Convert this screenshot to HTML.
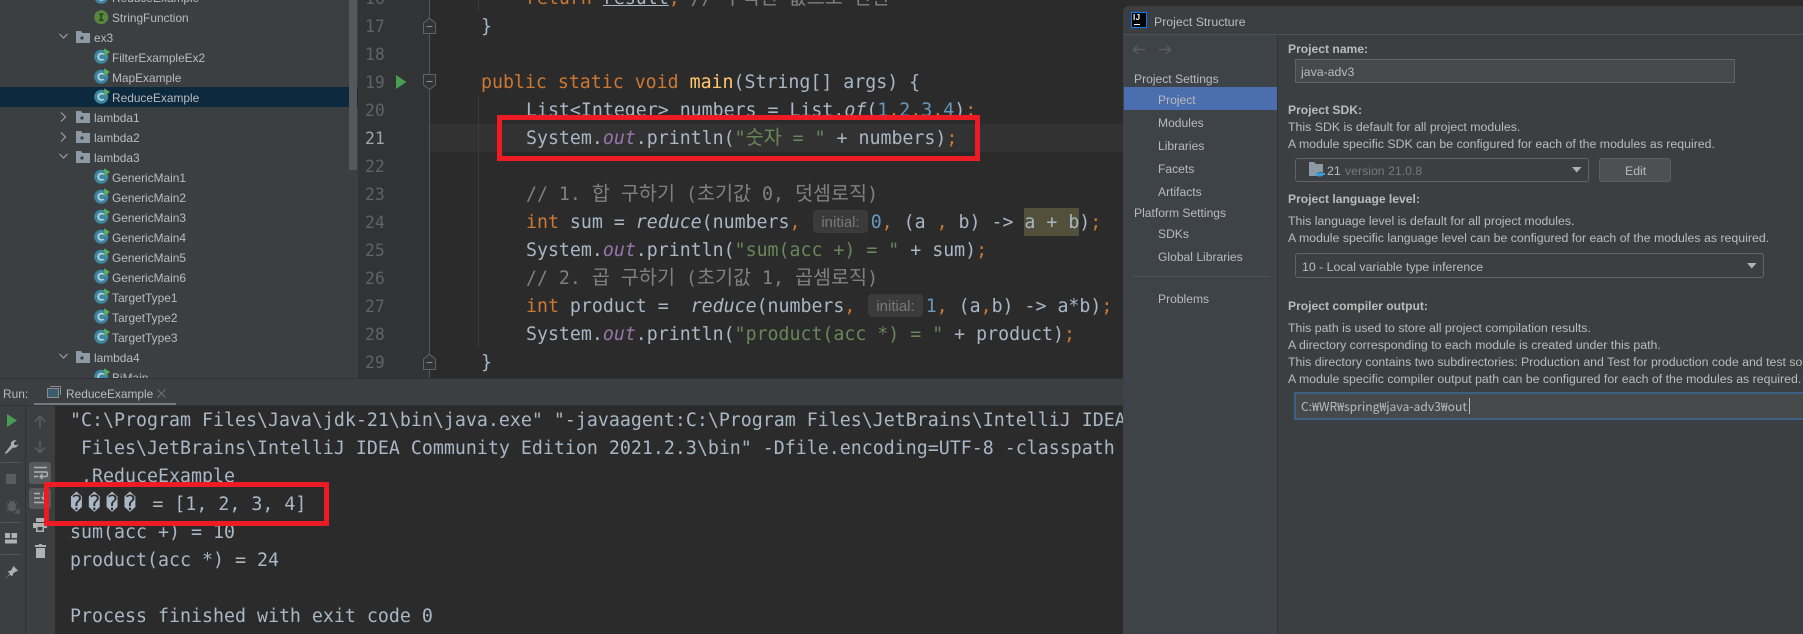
<!DOCTYPE html>
<html><head><meta charset="utf-8"><title>Project Structure</title>
<style>
html,body{margin:0;padding:0;width:1803px;height:634px;overflow:hidden;background:#2b2b2b}
div,span{box-sizing:border-box}
#w{position:absolute;left:0;top:0;width:1803px;height:634px;overflow:hidden}
.a{position:absolute}
.t{position:absolute;white-space:pre;font:11.9px/20px "Liberation Sans","Noto Sans CJK KR",sans-serif;color:#bbbbbb}
.q{font-size:12.3px;margin-top:1px}
.p{font-size:12.1px;margin-top:1px}
.m{position:absolute;white-space:pre;font:18.24px/28px "DejaVu Sans Mono","Noto Sans CJK KR",monospace;color:#a9b7c6;height:28px;margin-top:1px}
.o{font-size:18.27px}
.k{color:#cc7832}.s{color:#6a8759}.c{color:#808080}.n{color:#6897bb}.f{color:#9876aa;font-style:italic}.i{font-style:italic}.y{color:#ffc66d}
.h{font-family:"Noto Sans CJK KR",sans-serif;font-size:19.6px;line-height:0}
.u{font-size:21px;letter-spacing:5.2px;line-height:0}
.ln{position:absolute;left:365px;font:16.5px/28px "DejaVu Sans Mono",monospace;color:#606366;height:28px;margin-top:1px}
.d{position:absolute;white-space:pre;font:12.33px/17px "Liberation Sans",sans-serif;color:#bbbbbb;left:1288px;margin-top:1px}
.b{font-weight:bold;font-size:12.12px}
.rb{position:absolute;border:5px solid #ed1c24}
.hint{position:absolute;background:#3b3b3b;border-radius:4px;color:#787878;font:15px/25px "Liberation Sans",sans-serif;text-align:center}
svg{position:absolute;overflow:visible}
</style></head><body>
<svg width="0" height="0" style="position:absolute">
<symbol id="ci" viewBox="0 0 16 16"><circle cx="7.2" cy="8.8" r="7" fill="#3d87a3"/><path d="M9.6 6.4A3.2 3.2 0 1 0 9.6 11.2" fill="none" stroke="#c5d8df" stroke-width="1.6"/><path d="M10.2 0.3L16 4L10.2 8z" fill="#5cad5a"/></symbol>
<symbol id="fo" viewBox="0 0 14 12"><path d="M0 0H5L6.5 2H14V12H0z" fill="#8d99a3"/><circle cx="6" cy="7" r="1.6" fill="#3c3f41"/></symbol>
</svg>
<div id="w">

<!-- tree -->
<div class="a" style="left:0;top:0;width:358px;height:378px;background:#3c3f41;overflow:hidden">
<div class="a" style="left:0;top:87px;width:358px;height:20px;background:#0d293e"></div>
<div class="a" style="left:349px;top:0;width:8px;height:170px;background:#54585a"></div>

<svg style="left:94px;top:-12px" width="16" height="16"><use href="#ci"/></svg><div class="t" style="left:112px;top:-12px">ReduceExample</div>
<svg style="left:94px;top:10px" width="15" height="15"><circle cx="7.2" cy="7.2" r="7" fill="#59863f"/><path d="M5 4.2H9.5M7.2 4.2V10.2M5 10.2H9.5" stroke="#263a1c" stroke-width="1.4" fill="none"/></svg><div class="t" style="left:112px;top:8px">StringFunction</div>

<svg style="left:59px;top:33px" width="9" height="7"><path d="M.5 1L4.5 5L8.5 1" fill="none" stroke="#9a9da0" stroke-width="1.2"/></svg>
<svg style="left:76px;top:31px" width="14" height="12"><use href="#fo"/></svg><div class="t" style="left:94px;top:28px">ex3</div>

<svg style="left:94px;top:48px" width="16" height="16"><use href="#ci"/></svg><div class="t" style="left:112px;top:48px">FilterExampleEx2</div>
<svg style="left:94px;top:68px" width="16" height="16"><use href="#ci"/></svg><div class="t" style="left:112px;top:68px">MapExample</div>
<svg style="left:94px;top:88px" width="16" height="16"><use href="#ci"/></svg><div class="t" style="left:112px;top:88px">ReduceExample</div>

<svg style="left:60px;top:112px" width="7" height="10"><path d="M1 .5L5.5 5L1 9.5" fill="none" stroke="#9a9da0" stroke-width="1.2"/></svg>
<svg style="left:76px;top:111px" width="14" height="12"><use href="#fo"/></svg><div class="t" style="left:94px;top:108px">lambda1</div>
<svg style="left:60px;top:132px" width="7" height="10"><path d="M1 .5L5.5 5L1 9.5" fill="none" stroke="#9a9da0" stroke-width="1.2"/></svg>
<svg style="left:76px;top:131px" width="14" height="12"><use href="#fo"/></svg><div class="t" style="left:94px;top:128px">lambda2</div>
<svg style="left:59px;top:153px" width="9" height="7"><path d="M.5 1L4.5 5L8.5 1" fill="none" stroke="#9a9da0" stroke-width="1.2"/></svg>
<svg style="left:76px;top:151px" width="14" height="12"><use href="#fo"/></svg><div class="t" style="left:94px;top:148px">lambda3</div>

<svg style="left:94px;top:168px" width="16" height="16"><use href="#ci"/></svg><div class="t" style="left:112px;top:168px">GenericMain1</div>
<svg style="left:94px;top:188px" width="16" height="16"><use href="#ci"/></svg><div class="t" style="left:112px;top:188px">GenericMain2</div>
<svg style="left:94px;top:208px" width="16" height="16"><use href="#ci"/></svg><div class="t" style="left:112px;top:208px">GenericMain3</div>
<svg style="left:94px;top:228px" width="16" height="16"><use href="#ci"/></svg><div class="t" style="left:112px;top:228px">GenericMain4</div>
<svg style="left:94px;top:248px" width="16" height="16"><use href="#ci"/></svg><div class="t" style="left:112px;top:248px">GenericMain5</div>
<svg style="left:94px;top:268px" width="16" height="16"><use href="#ci"/></svg><div class="t" style="left:112px;top:268px">GenericMain6</div>
<svg style="left:94px;top:288px" width="16" height="16"><use href="#ci"/></svg><div class="t" style="left:112px;top:288px">TargetType1</div>
<svg style="left:94px;top:308px" width="16" height="16"><use href="#ci"/></svg><div class="t" style="left:112px;top:308px">TargetType2</div>
<svg style="left:94px;top:328px" width="16" height="16"><use href="#ci"/></svg><div class="t" style="left:112px;top:328px">TargetType3</div>

<svg style="left:59px;top:353px" width="9" height="7"><path d="M.5 1L4.5 5L8.5 1" fill="none" stroke="#9a9da0" stroke-width="1.2"/></svg>
<svg style="left:76px;top:351px" width="14" height="12"><use href="#fo"/></svg><div class="t" style="left:94px;top:348px">lambda4</div>
<svg style="left:94px;top:368px" width="16" height="16"><use href="#ci"/></svg><div class="t" style="left:112px;top:368px">BiMain</div>
</div>

<!-- editor -->
<div class="a" style="left:358px;top:0;width:765px;height:378px;background:#2b2b2b;overflow:hidden" id="e">
<div class="a" style="left:0;top:0;width:72px;height:378px;background:#313335"></div>
<div class="a" style="left:72px;top:124px;width:693px;height:28px;background:#323232"></div>
<div class="a" style="left:71px;top:0;width:1px;height:378px;background:#555555"></div>
<div class="a" style="left:120px;top:0;width:1px;height:12px;background:#3b3b3b"></div>
<div class="a" style="left:120px;top:96px;width:1px;height:252px;background:#3b3b3b"></div>
<div class="a" style="left:666px;top:208px;width:55px;height:28px;background:#52503a"></div>
</div>
<div class="a" style="left:0;top:378px;width:1123px;height:256px;background:#2b2b2b"></div>

<div class="ln" style="top:-16px">16</div>
<div class="ln" style="top:12px">17</div>
<div class="ln" style="top:40px">18</div>
<div class="ln" style="top:68px">19</div>
<div class="ln" style="top:96px">20</div>
<div class="ln" style="top:124px;color:#a4a3a3">21</div>
<div class="ln" style="top:152px">22</div>
<div class="ln" style="top:180px">23</div>
<div class="ln" style="top:208px">24</div>
<div class="ln" style="top:236px">25</div>
<div class="ln" style="top:264px">26</div>
<div class="ln" style="top:292px">27</div>
<div class="ln" style="top:320px">28</div>
<div class="ln" style="top:348px">29</div>

<svg style="left:396px;top:75px" width="11" height="14"><path d="M0 0L10.5 7L0 14z" fill="#499c54"/></svg>
<svg style="left:423px;top:18px" width="13" height="16"><path d="M.5 15.5V5L6.5 .5L12.5 5V15.5z" fill="#313335" stroke="#606366"/><path d="M3.5 8.5H9.5" stroke="#8a8d90"/></svg>
<svg style="left:423px;top:74px" width="13" height="16"><path d="M.5 .5V11L6.5 15.5L12.5 11V.5z" fill="#313335" stroke="#606366"/><path d="M3.5 7.5H9.5" stroke="#8a8d90"/></svg>
<svg style="left:423px;top:354px" width="13" height="16"><path d="M.5 15.5V5L6.5 .5L12.5 5V15.5z" fill="#313335" stroke="#606366"/><path d="M3.5 8.5H9.5" stroke="#8a8d90"/></svg>

<div class="m" style="left:526px;top:-16px"><span class="k">return</span> <span style="text-decoration:underline">result</span><span class="k">;</span> <span class="c">// <span class="h">누적된</span> <span class="h">값으로</span> <span class="h">반환</span></span></div>
<div class="m" style="left:481px;top:12px">}</div>
<div class="m" style="left:481px;top:68px"><span class="k">public static void</span> <span class="y">main</span>(String[] args) {</div>
<div class="m" style="left:526px;top:96px">List&lt;Integer&gt; numbers = List.<span class="i">of</span>(<span class="n">1</span><span class="k">,</span><span class="n">2</span><span class="k">,</span><span class="n">3</span><span class="k">,</span><span class="n">4</span>)<span class="k">;</span></div>
<div class="m" style="left:526px;top:124px">System.<span class="f">out</span>.println(<span class="s">"<span class="h">숫자</span> = "</span> + numbers)<span class="k">;</span></div>
<div class="m c" style="left:526px;top:180px">// 1. <span class="h">합</span> <span class="h">구하기</span> (<span class="h">초기값</span> 0, <span class="h">덧셈로직</span>)</div>
<div class="m" style="left:526px;top:208px"><span class="k">int</span> sum = <span class="i">reduce</span>(numbers<span class="k">,</span></div>
<div class="hint" style="left:813px;top:210px;width:55px;height:23px">initial:</div>
<div class="m" style="left:870.7px;top:208px"><span class="n">0</span><span class="k">,</span> (a <span class="k">,</span> b) -&gt; a + b)<span class="k">;</span></div>
<div class="m" style="left:526px;top:236px">System.<span class="f">out</span>.println(<span class="s">"sum(acc +) = "</span> + sum)<span class="k">;</span></div>
<div class="m c" style="left:526px;top:264px">// 2. <span class="h">곱</span> <span class="h">구하기</span> (<span class="h">초기값</span> 1, <span class="h">곱셈로직</span>)</div>
<div class="m" style="left:526px;top:292px"><span class="k">int</span> product =  <span class="i">reduce</span>(numbers<span class="k">,</span></div>
<div class="hint" style="left:868px;top:294px;width:55px;height:23px">initial:</div>
<div class="m" style="left:925.7px;top:292px"><span class="n">1</span><span class="k">,</span> (a<span class="k">,</span>b) -&gt; a*b)<span class="k">;</span></div>
<div class="m" style="left:526px;top:320px">System.<span class="f">out</span>.println(<span class="s">"product(acc *) = "</span> + product)<span class="k">;</span></div>
<div class="m" style="left:481px;top:348px">}</div>

<div class="rb" style="left:497px;top:115px;width:483px;height:46px"></div>

<!-- run panel -->
<div class="a" style="left:0;top:378px;width:1123px;height:1px;background:#323232"></div>
<div class="a" style="left:0;top:379px;width:1123px;height:26px;background:#3c3f41"></div>
<div class="a" style="left:34px;top:403px;width:142px;height:3px;background:#747a80"></div>
<div class="t" style="left:3px;top:384px">Run:</div>
<svg style="left:47px;top:386px" width="14" height="12"><path d="M3 .5H13.5V9" fill="none" stroke="#8a8d90"/><rect x=".5" y="2.5" width="11" height="9" fill="#3a5c6e" stroke="#8a8d90"/></svg>
<div class="t" style="left:66px;top:384px">ReduceExample</div>
<svg style="left:157px;top:389px" width="9" height="9"><path d="M.5 .5L8.5 8.5M8.5 .5L.5 8.5" stroke="#6e7072" stroke-width="1.1"/></svg>
<div class="a" style="left:0;top:405px;width:1123px;height:1px;background:#323232"></div>
<div class="a" style="left:0;top:406px;width:55px;height:228px;background:#3c3f41"></div>
<div class="a" style="left:25px;top:406px;width:1px;height:228px;background:#323232"></div>

<svg style="left:7px;top:414px" width="10" height="13"><path d="M0 0L10 6.5L0 13z" fill="#499c54"/></svg>
<svg style="left:4px;top:440px" width="15" height="14"><path d="M1 13L2 14L9 7.5C11 8 13.5 7.5 14.5 4L12 5.5L10 4.5L10 2.5L12.5 .5C9 -.5 6.5 2 7 5z" fill="#afb1b3"/></svg>
<div class="a" style="left:1px;top:462px;width:20px;height:1px;background:#555"></div>
<div class="a" style="left:6px;top:474px;width:10px;height:10px;background:#5a5d5f"></div>
<svg style="left:5px;top:498px" width="14" height="15"><path d="M4 2L6 4H8L10 2M2 5L4 7M12 5L10 7M1 9H3M2 13L4 11" stroke="#5a5d5f" fill="none"/><ellipse cx="7" cy="8.5" rx="4" ry="5" fill="#5a5d5f"/><path d="M8 9L14 15M14 10.5V15H9.5" stroke="#5a5d5f" stroke-width="1.3" fill="none"/></svg>
<div class="a" style="left:1px;top:522px;width:20px;height:1px;background:#555"></div>
<svg style="left:5px;top:533px" width="12" height="11"><path d="M0 0H5V5H0zM6.5 0H12V5H6.5zM0 6.5H12V10.5H0z" fill="#afb1b3"/></svg>
<div class="a" style="left:1px;top:554px;width:20px;height:1px;background:#555"></div>
<svg style="left:4px;top:565px" width="15" height="14"><path d="M1 14L6 8.5L3.5 6.5L7 5.5L9.5 1L14 5.5L9.5 8L8 11.5L6 9.5z" fill="#afb1b3"/></svg>

<svg style="left:34px;top:415px" width="12" height="13"><path d="M6 13V1.5M1 6.5L6 1.5L11 6.5" stroke="#5a5d5f" stroke-width="1.6" fill="none"/></svg>
<svg style="left:34px;top:441px" width="12" height="13"><path d="M6 0V11.5M1 6.5L6 11.5L11 6.5" stroke="#5a5d5f" stroke-width="1.6" fill="none"/></svg>
<div class="a" style="left:29px;top:462px;width:22px;height:22px;background:#575a5c;border-radius:3px"></div>
<svg style="left:33px;top:466px" width="15" height="14"><path d="M1 1.5H14M1 6H13C15 6 15 10.5 13 10.5H7M9.5 8L7 10.5L9.5 13M1 10.5H5" stroke="#afb1b3" stroke-width="1.4" fill="none"/></svg>
<div class="a" style="left:29px;top:488px;width:22px;height:21px;background:#575a5c;border-radius:3px"></div>
<svg style="left:33px;top:492px" width="14" height="13"><path d="M1 1.5H7M1 6H7M1 10.5H13M11 0V7M8.5 5L11 7.5L13.5 5" stroke="#afb1b3" stroke-width="1.4" fill="none"/></svg>
<svg style="left:33px;top:518px" width="14" height="14"><path d="M3 0H11V4H3zM0 5H14V10H11V14H3V10H0z" fill="#afb1b3"/><rect x="4.5" y="9" width="5" height="3.5" fill="#3c3f41"/></svg>
<svg style="left:35px;top:544px" width="11" height="14"><path d="M4 0H7V1H11V3H0V1H4zM1 4H10V14H1z" fill="#afb1b3"/></svg>

<div class="m o" style="left:70px;top:406px">"C:\Program Files\Java\jdk-21\bin\java.exe" "-javaagent:C:\Program Files\JetBrains\IntelliJ IDEA</div>
<div class="m o" style="left:70px;top:434px"> Files\JetBrains\IntelliJ IDEA Community Edition 2021.2.3\bin" -Dfile.encoding=UTF-8 -classpath</div>
<div class="m o" style="left:70px;top:462px"> .ReduceExample</div>
<div class="m o" style="left:70px;top:490px"><span class="u">����</span> = [1, 2, 3, 4]</div>
<div class="m o" style="left:70px;top:518px">sum(acc +) = 10</div>
<div class="m o" style="left:70px;top:546px">product(acc *) = 24</div>
<div class="m o" style="left:70px;top:602px">Process finished with exit code 0</div>
<div class="rb" style="left:44px;top:482px;width:285px;height:44px"></div>

<!-- dialog -->
<div class="a" style="left:1123px;top:6px;width:680px;height:628px;background:#3c3f41;border-radius:6px 0 0 0;overflow:hidden">
<div class="a" style="left:0;top:28px;width:680px;height:1px;background:#515151"></div>
<div class="a" style="left:0;top:29px;width:154px;height:599px;background:#3e4249"></div>
<div class="a" style="left:154px;top:29px;width:1px;height:599px;background:#323232"></div>
<div class="a" style="left:1px;top:81px;width:153px;height:23px;background:#4b6eaf"></div>
<div class="a" style="left:10px;top:270px;width:137px;height:1px;background:#4d5056"></div>
</div>
<div class="a" style="left:1131px;top:12px;width:16px;height:16px;background:#000;border:1px solid #087cfa"></div>
<div class="a" style="left:1134px;top:24px;width:6px;height:1px;background:#fff"></div>
<div class="a" style="left:1133px;top:12px;font:bold 8px/12px 'Liberation Sans',sans-serif;color:#fff;letter-spacing:.4px">IJ</div>
<div class="t" style="left:1154px;top:12px;font-size:12.3px">Project Structure</div>
<svg style="left:1132px;top:44px" width="40" height="11"><path d="M13 5.5H1.5M5.5 1.5L1.5 5.5L5.5 9.5M27 5.5H38.5M34.5 1.5L38.5 5.5L34.5 9.5" stroke="#5a5d5f" stroke-width="1.5" fill="none"/></svg>

<div class="t p" style="left:1134px;top:68px">Project Settings</div>
<div class="t p" style="left:1158px;top:89px">Project</div>
<div class="t p" style="left:1158px;top:112px">Modules</div>
<div class="t p" style="left:1158px;top:135px">Libraries</div>
<div class="t p" style="left:1158px;top:158px">Facets</div>
<div class="t p" style="left:1158px;top:181px">Artifacts</div>
<div class="t p" style="left:1134px;top:202px">Platform Settings</div>
<div class="t p" style="left:1158px;top:223px">SDKs</div>
<div class="t p" style="left:1158px;top:246px">Global Libraries</div>
<div class="t p" style="left:1158px;top:288px">Problems</div>

<div class="d b" style="top:40px">Project name:</div>
<div class="a" style="left:1295px;top:59px;width:440px;height:24px;background:#45494a;border:1px solid #646464"></div>
<div class="t q" style="left:1301px;top:60.5px">java-adv3</div>

<div class="d b" style="top:101px">Project SDK:</div>
<div class="d" style="top:118px">This SDK is default for all project modules.</div>
<div class="d" style="top:135px">A module specific SDK can be configured for each of the modules as required.</div>
<div class="a" style="left:1295px;top:158px;width:294px;height:24px;background:#3c3f41;border:1px solid #646464;border-radius:3px"></div>
<svg style="left:1309px;top:162px" width="17" height="16"><path d="M0 0H5L7 2H14V10H9V14H0z" fill="#8d99a3"/><path d="M7 10.5H14V13C14 15 7 15 7 13zM14 11H16V13H14" fill="#389fd6"/></svg>
<div class="t q" style="left:1327px;top:159.5px">21</div>
<div class="t q" style="left:1345px;top:159.5px;color:#787878">version 21.0.8</div>
<svg style="left:1572px;top:167px" width="10" height="6"><path d="M0 0H9.5L4.75 5.5z" fill="#afb1b3"/></svg>
<div class="a" style="left:1599px;top:158px;width:72px;height:24px;background:#4c5052;border:1px solid #5e6060;border-radius:3px"></div>
<div class="t q" style="left:1625px;top:160px">Edit</div>

<div class="d b" style="top:190px">Project language level:</div>
<div class="d" style="top:212px">This language level is default for all project modules.</div>
<div class="d" style="top:229px">A module specific language level can be configured for each of the modules as required.</div>
<div class="a" style="left:1295px;top:253px;width:469px;height:25px;background:#3c3f41;border:1px solid #646464;border-radius:3px"></div>
<div class="t q" style="left:1302px;top:256px">10 - Local variable type inference</div>
<svg style="left:1747px;top:263px" width="10" height="6"><path d="M0 0H9.5L4.75 5.5z" fill="#afb1b3"/></svg>

<div class="d b" style="top:297px">Project compiler output:</div>
<div class="d" style="top:319px">This path is used to store all project compilation results.</div>
<div class="d" style="top:336px">A directory corresponding to each module is created under this path.</div>
<div class="d" style="top:353px">This directory contains two subdirectories: Production and Test for production code and test sources, respectively.</div>
<div class="d" style="top:370px">A module specific compiler output path can be configured for each of the modules as required.</div>
<div class="a" style="left:1294px;top:392px;width:510px;height:28px;background:#45494a;border:2px solid #3d6185;border-right:0"></div>
<div class="t" style="left:1301px;top:397px;font-family:'Noto Sans CJK KR',sans-serif;font-size:12.15px">C:₩WR₩spring₩java-adv3₩out</div>
<div class="a" style="left:1469px;top:398px;width:1px;height:16px;background:#bbbbbb"></div>
</div>
</body></html>
